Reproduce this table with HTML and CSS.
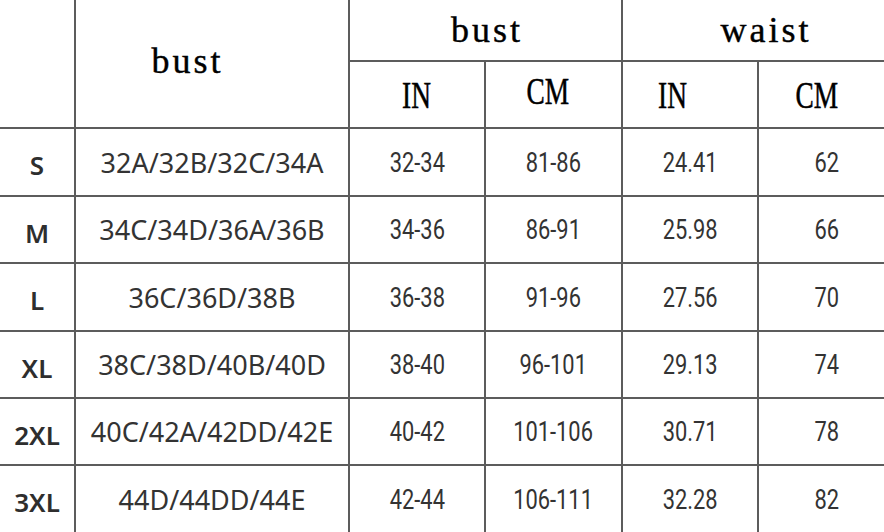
FILE: index.html
```html
<!DOCTYPE html>
<html>
<head>
<meta charset="utf-8">
<link rel="stylesheet" href="styles.css">
</head>
<body>
<div class="chart">
  <div class="cell corner"></div>
  <div class="cell head bust-main"><span class="serif">bust</span></div>
  <div class="cell head group-bust"><span class="serif">bust</span></div>
  <div class="cell head group-waist"><span class="serif">waist</span></div>
  <div class="cell head unit u1"><span class="mono">IN</span></div>
  <div class="cell head unit u2"><span class="mono">CM</span></div>
  <div class="cell head unit u3"><span class="mono">IN</span></div>
  <div class="cell head unit u4"><span class="mono">CM</span></div>

  <div class="cell size">S</div>
  <div class="cell cup">32A/32B/32C/34A</div>
  <div class="cell num"><span>32-34</span></div>
  <div class="cell num"><span>81-86</span></div>
  <div class="cell num"><span>24.41</span></div>
  <div class="cell num last"><span>62</span></div>

  <div class="cell size">M</div>
  <div class="cell cup">34C/34D/36A/36B</div>
  <div class="cell num"><span>34-36</span></div>
  <div class="cell num"><span>86-91</span></div>
  <div class="cell num"><span>25.98</span></div>
  <div class="cell num last"><span>66</span></div>

  <div class="cell size">L</div>
  <div class="cell cup">36C/36D/38B</div>
  <div class="cell num"><span>36-38</span></div>
  <div class="cell num"><span>91-96</span></div>
  <div class="cell num"><span>27.56</span></div>
  <div class="cell num last"><span>70</span></div>

  <div class="cell size">XL</div>
  <div class="cell cup">38C/38D/40B/40D</div>
  <div class="cell num"><span>38-40</span></div>
  <div class="cell num"><span>96-101</span></div>
  <div class="cell num"><span>29.13</span></div>
  <div class="cell num last"><span>74</span></div>

  <div class="cell size">2XL</div>
  <div class="cell cup">40C/42A/42DD/42E</div>
  <div class="cell num"><span>40-42</span></div>
  <div class="cell num"><span>101-106</span></div>
  <div class="cell num"><span>30.71</span></div>
  <div class="cell num last"><span>78</span></div>

  <div class="cell size">3XL</div>
  <div class="cell cup">44D/44DD/44E</div>
  <div class="cell num"><span>42-44</span></div>
  <div class="cell num"><span>106-111</span></div>
  <div class="cell num"><span>32.28</span></div>
  <div class="cell num last"><span>82</span></div>
</div>
</body>
</html>
```

FILE: styles.css
```css
html, body {
  margin: 0;
  padding: 0;
  background: #ffffff;
}

body {
  width: 884px;
  height: 532px;
  overflow: hidden;
}

.chart {
  display: grid;
  grid-template-columns: 74px 272px 134px 135px 134px 125px;
  grid-template-rows: 60px 65px 66px 65px 66px 65px 65px 66px;
  gap: 2px;
  background: #5c5c5c;
  width: 884px;
}

.cell {
  background: #ffffff;
  display: flex;
  align-items: center;
  justify-content: center;
  color: #333333;
}

.corner {
  grid-row: 1 / 3;
  grid-column: 1;
}

.head {
  color: #000000;
}

.bust-main {
  grid-row: 1 / 3;
  grid-column: 2;
  padding-bottom: 6px;
  padding-right: 52px;
}

.group-bust {
  grid-column: 3 / 5;
}

.group-waist {
  grid-column: 5 / 7;
  padding-left: 22px;
}

.serif {
  font-family: "Liberation Serif", "DejaVu Serif", serif;
  font-size: 36px;
  letter-spacing: 3px;
  padding-left: 3px;
  -webkit-text-stroke: 0.4px #000000;
}

.mono {
  display: inline-block;
  font-family: "Liberation Serif", "DejaVu Serif", serif;
  font-size: 37px;
  transform: scaleX(0.74);
  -webkit-text-stroke: 0.5px #000000;
}

.unit {
  padding-top: 2px;
}

.u2 {
  padding-top: 0;
  padding-bottom: 6px;
  padding-right: 12px;
}

.u3 {
  padding-right: 34px;
}

.u4 {
  padding-right: 10px;
}

.size {
  font-family: "Noto Sans", "Open Sans", sans-serif;
  font-weight: 600;
  font-size: 26px;
  padding-top: 6px;
  color: #2e2e2e;
}

.cup {
  font-family: "Noto Sans", "Open Sans", sans-serif;
  font-size: 27px;
  color: #333333;
}

.num span {
  display: inline-block;
  font-family: Roboto, "Noto Sans", sans-serif;
  font-size: 28px;
  color: #333333;
  transform: scaleX(0.78);
}

.num.last {
  padding-left: 10px;
}
```
